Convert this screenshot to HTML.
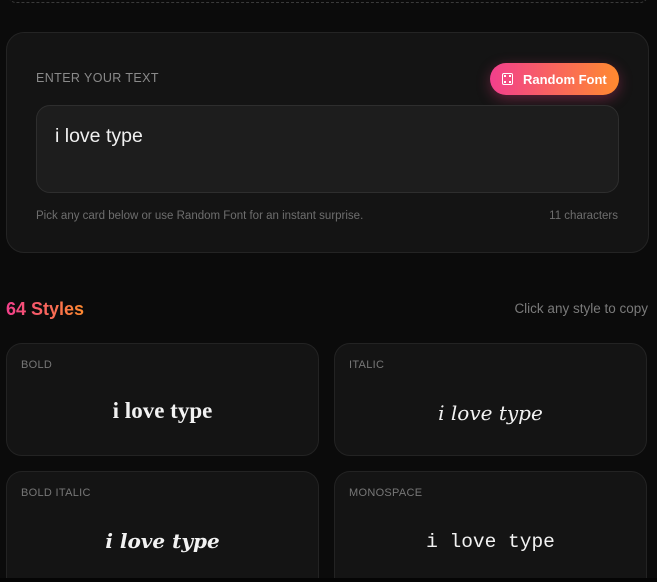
<!DOCTYPE html>
<html><head><style>
*{box-sizing:border-box;margin:0;padding:0}
html,body{width:657px;height:582px;overflow:hidden}
body{background:#0b0b0b;position:relative;font-family:"Liberation Sans","DejaVu Sans",sans-serif}
.dash{position:absolute;left:8px;top:-10px;width:640px;height:13px;border:1px dashed #3a3a3a;border-top:none;border-radius:0 0 8px 8px}
.panel{position:absolute;left:6px;top:32px;width:643px;height:221px;background:#141414;border:1px solid #242424;border-radius:18px}
.lbl{position:absolute;left:29px;top:38px;color:#8a8a8a;font-size:12.5px;letter-spacing:.4px}
.btn{position:absolute;left:483px;top:30px;width:129px;height:32px;border-radius:16px;background:linear-gradient(90deg,#f23f8c,#ff8a2f);box-shadow:0 4px 14px rgba(240,60,130,.35);color:#fff;font-weight:bold;font-size:13px;display:flex;align-items:center;padding-left:12px}
.dice{width:11px;height:12px;border:1.5px solid #fff;border-radius:2px;margin-right:10px;position:relative}
.dice i{position:absolute;width:2px;height:2px;background:#fff}
.ta{position:absolute;left:29px;top:72px;width:583px;height:88px;background:#1d1d1d;border:1px solid #2e2e2e;border-radius:14px;color:#f0f0f0;font-size:19.5px;padding:19px 0 0 18px}
.foot{position:absolute;top:177px;font-size:11.5px;color:#6e6e6e}
.h{position:absolute;left:6px;top:299px;font-size:18px;font-weight:bold;background:linear-gradient(90deg,#f23f8c,#ff8a2f);-webkit-background-clip:text;color:transparent}
.hr{position:absolute;right:9px;top:301px;font-size:13.5px;color:#7a7a7a}
.card{position:absolute;width:313px;height:113px;background:#141414;border:1px solid #232323;border-radius:16px}
.card .t{position:absolute;left:14px;top:15px;font-size:11px;color:#777;letter-spacing:.3px}
.card .s{position:absolute;left:0;right:0;top:55px;text-align:center;color:#f2f2f2;font-size:21px}
.bot{position:absolute;left:0;top:578px;width:657px;height:4px;background:#050505}
</style></head><body>
<div class="dash"></div>
<div class="panel">
<div class="lbl">ENTER YOUR TEXT</div>
<div class="btn"><span class="dice"><i style="left:1px;top:1px"></i><i style="right:1px;top:1px"></i><i style="left:1px;bottom:1px"></i><i style="right:1px;bottom:1px"></i></span>Random Font</div>
<div class="ta">i love type</div>
<div class="foot" style="left:29px">Pick any card below or use Random Font for an instant surprise.</div>
<div class="foot" style="right:30px">11 characters</div>
</div>
<div class="h">64 Styles</div>
<div class="hr">Click any style to copy</div>
<div class="card" style="left:6px;top:343px"><div class="t">BOLD</div><div class="s" style="font-family:'Liberation Serif',serif;font-weight:bold;font-size:23px;top:54px">i love type</div></div>
<div class="card" style="left:334px;top:343px"><div class="t">ITALIC</div><div class="s" style="font-family:'DejaVu Serif',serif;font-style:italic;font-size:20px;top:57px">i love type</div></div>
<div class="card" style="left:6px;top:471px;height:107px;border-bottom:none;border-radius:16px 16px 0 0"><div class="t">BOLD ITALIC</div><div class="s" style="font-family:'DejaVu Serif',serif;font-style:italic;font-weight:bold;font-size:20px;top:57px">i love type</div></div>
<div class="card" style="left:334px;top:471px;height:107px;border-bottom:none;border-radius:16px 16px 0 0"><div class="t">MONOSPACE</div><div class="s" style="font-family:'Liberation Mono',monospace;font-size:19.5px;top:59px">i love type</div></div>
<div class="bot"></div>
</body></html>
